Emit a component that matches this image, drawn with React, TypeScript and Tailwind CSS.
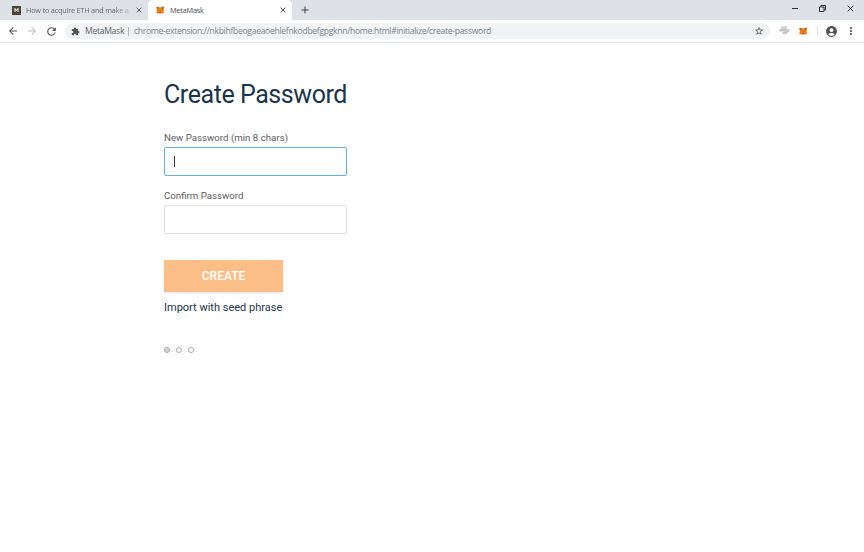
import React from "react";
import {
  MdAccountCircle,
  MdArrowBack,
  MdArrowForward,
  MdExtension,
  MdMoreVert,
  MdRefresh,
  MdStarBorder,
} from "react-icons/md";

function Fox({ className }: { className: string }) {
  return (
    <svg viewBox="0 0 24 22" className={className} aria-hidden="true">
      <path d="M1 2l9 1h5l8-3v13l1 5-3 4-6-1-3 1-3-1-7 1-1-5 2-5z" fill="#ef8420" />
      <path d="M3 2l7 3-3 7H2zM23 1l-8 4 2 7h6z" fill="#e57a1c" />
      <path d="M1 2l8 2-5 3zM23 1l-7 3 4 3z" fill="#9a5020" />
      <path d="M7 12l3 1v2zM17 12l-3 1v2zM10 18h4v2h-4z" fill="#3a2b22" />
    </svg>
  );
}

function Cross({ className }: { className: string }) {
  return (
    <svg viewBox="0 0 10 10" className={className} fill="none" stroke="currentColor" aria-hidden="true">
      <path d="M1 1l8 8M9 1l-8 8" />
    </svg>
  );
}

function TabStrip() {
  return (
    <div className="flex h-5 bg-[#dee1e6] text-[7.3px] tracking-[-0.2px] text-[#5f6368]">
      <div className="flex w-[148px] items-center pl-3">
        <div className="flex h-[9px] w-[9px] shrink-0 items-center justify-center bg-[#4b443b]">
          <svg viewBox="0 0 8 8" className="h-[4px] w-[5px]" fill="none" stroke="#fff" strokeWidth="2" aria-hidden="true">
            <path d="M1 8V1l3 4 3-4v7" />
          </svg>
        </div>
        <span className="ml-[5px] w-[103px] bg-linear-to-r from-[#5f6368] from-85% to-[#5f636840] bg-clip-text whitespace-nowrap text-transparent">
          How to acquire ETH and make a
        </span>
        <Cross className="ml-[7px] h-[6px] w-[6px] stroke-[1.6] text-[#5f6368]" />
      </div>
      <div className="flex w-36 items-center rounded-t-[5px] bg-white pl-[8px] text-[#46494d]">
        <Fox className="h-[8px] w-[8px]" />
        <span className="ml-[6px] w-[110px]">MetaMask</span>
        <Cross className="h-[6px] w-[6px] stroke-[1.6]" />
      </div>
      <svg viewBox="0 0 10 10" className="mt-[6px] ml-[9px] h-[8px] w-[8px]" fill="none" stroke="#46494d" strokeWidth="1.3" aria-hidden="true">
        <path d="M5 .5v9M.5 5h9" />
      </svg>
      <div className="ml-auto flex h-[17px] items-center pr-[10px] text-[#202124]">
        <div className="h-px w-[6px] bg-[#333]" />
        <svg viewBox="0 0 7 7" className="ml-[21px] h-[7px] w-[7px]" fill="none" stroke="currentColor" strokeWidth=".9" aria-hidden="true">
          <path d="M.5 2h4.5v4.5H.5zM2 2V.5h4.5V5H5" />
        </svg>
        <Cross className="ml-[21px] h-[7px] w-[7px] stroke-[1.3]" />
      </div>
    </div>
  );
}

function Toolbar() {
  return (
    <div className="flex h-[23px] items-center border-b border-[#e8eaed] bg-white pl-[7px] text-[#505357]">
      <MdArrowBack className="h-[12px] w-[12px]" />
      <MdArrowForward className="ml-[7px] h-[12px] w-[12px] text-[#babcbe]" />
      <MdRefresh className="ml-[7px] h-[13px] w-[13px]" />
      <div className="ml-[7px] flex h-4 w-[705px] items-center rounded-full bg-[#f1f3f4] pr-[6px] pl-[6px] text-[8.6px]">
        <MdExtension className="h-[9px] w-[9px]" />
        <span className="ml-[5px] w-[39px] tracking-[-0.3px] whitespace-nowrap text-[#5f6368]">MetaMask</span>
        <div className="ml-[4px] h-[9px] w-px bg-[#b4b7ba]" />
        <span className="ml-[5px] tracking-[-0.31px] whitespace-nowrap text-[#80868b]">
          chrome-extension://nkbihfbeogaeaoehlefnkodbefgpgknn/home.html#initialize/create-password
        </span>
        <MdStarBorder className="ml-auto h-[10px] w-[10px]" />
      </div>
      <svg viewBox="0 0 12 12" className="ml-[8px] h-[12px] w-[12px]" aria-hidden="true">
        <path d="M3 1.500L9 1v3h2.500l-.5 2.500-4.500 4.500.3-2.500L4 9l1-2.500L1 6.500l.5-2.500H3z" fill="#d2d2d2" />
        <path d="M2 5.500l6-1M5 8.500l5.500-2.500" stroke="#b5b5b5" fill="none" />
      </svg>
      <Fox className="ml-[9px] h-[8px] w-[8px]" />
      <div className="ml-[10px] h-2.5 w-px bg-[#dddfe2]" />
      <MdAccountCircle className="ml-[7px] h-[13px] w-[13px]" />
      <MdMoreVert className="ml-[7px] h-[12px] w-[12px]" />
    </div>
  );
}

export default function App() {
  return (
    <div className="h-[552px] w-[864px] overflow-hidden bg-white font-['Open_Sans','Noto_Sans',sans-serif]">
      <TabStrip />
      <Toolbar />
      <main className="flex flex-col items-start pt-[38px] pl-[164px] font-[Roboto,sans-serif]">
        <h1 className="h-7 text-[25px] leading-7 tracking-[-0.43px] whitespace-nowrap text-[#1b344d]">Create Password</h1>
        <label className="mt-[23px] h-[15px] text-[9.7px] leading-3 text-[#5b5b5b]">New Password (min 8 chars)</label>
        <div className="flex h-[29px] w-[183px] items-center rounded-[2px] border border-[#61b2e4] pl-[9px]">
          <div className="h-[11px] w-px bg-[#333]" />
        </div>
        <label className="mt-[14px] h-[15px] text-[9.7px] leading-3 text-[#5b5b5b]">Confirm Password</label>
        <div className="h-[29px] w-[183px] rounded-[2px] border border-[#dee0e7]" />
        <button className="mt-[25.5px] h-[32.5px] w-[119px] bg-[#fbbe87] text-[12px] leading-4 font-medium text-white shadow-[0_1px_2px_#00000020]">
          CREATE
        </button>
        <a className="mt-[8px] h-4 text-[11px] leading-4 whitespace-nowrap text-[#1b344d]">Import with seed phrase</a>
        <div className="mt-[30.5px] flex gap-[6px]">
          <div className="h-[6px] w-[6px] rounded-full border border-[#aaa] bg-[#d2d2d2]" />
          <div className="h-[6px] w-[6px] rounded-full border border-[#aaa]" />
          <div className="h-[6px] w-[6px] rounded-full border border-[#aaa]" />
        </div>
      </main>
    </div>
  );
}
